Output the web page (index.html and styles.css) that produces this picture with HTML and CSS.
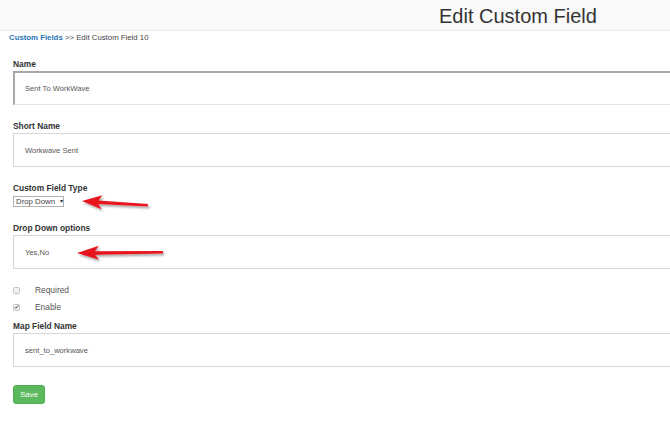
FILE: index.html
```html
<!DOCTYPE html>
<html>
<head>
<meta charset="utf-8">
<link rel="stylesheet" href="styles.css">
</head>
<body>
<div class="page">
  <header class="topbar">
    <h1 class="title">Edit Custom Field</h1>
  </header>
  <div class="crumbs"><a class="crumb-link">Custom Fields</a> &gt;&gt; Edit Custom Field 10</div>
  <form class="form">
    <div class="group">
      <label class="label">Name</label>
      <div class="input input-focus">Sent To WorkWave</div>
    </div>
    <div class="group">
      <label class="label">Short Name</label>
      <div class="input">Workwave Sent</div>
    </div>
    <div class="group group-select">
      <label class="label">Custom Field Type</label>
      <div class="select"><span>Drop Down</span><span class="caret">&#9662;</span></div>
    </div>
    <div class="group">
      <label class="label">Drop Down options</label>
      <div class="input">Yes,No</div>
    </div>
    <div class="checks">
      <div class="check-row"><span class="box"></span><span class="check-label">Required</span></div>
      <div class="check-row"><span class="box"><svg class="tick" viewBox="0 0 8 8" width="6" height="6"><path d="M1 4.2 L3 6.2 L7 1.5" fill="none" stroke="#555" stroke-width="1.6"/></svg></span><span class="check-label">Enable</span></div>
    </div>
    <div class="group">
      <label class="label">Map Field Name</label>
      <div class="input">sent_to_workwave</div>
    </div>
    <button type="button" class="btn-save">Save</button>
  </form>
  <svg class="arrows" width="670" height="421" viewBox="0 0 670 421">
    <defs>
      <filter id="sh" x="-20%" y="-50%" width="140%" height="200%">
        <feDropShadow dx="1.5" dy="2" stdDeviation="1.2" flood-color="#000" flood-opacity="0.35"/>
      </filter>
    </defs>
    <g filter="url(#sh)" fill="#e8141b">
      <path transform="translate(82 201) rotate(3.5)" d="M0 0 L20 -7 L16.5 -1.6 L66 -1.1 L66 1.4 L16.5 2 L20 7 Z"/>
      <path transform="translate(77 253) rotate(-0.6)" d="M0 0 L22 -7 L18 -1.6 L86 -1.1 L86 1.4 L18 2 L22 7 Z"/>
    </g>
  </svg>
</div>
</body>
</html>
```
FILE: styles.css
```css
html, body {
  margin: 0;
  padding: 0;
  background: #fff;
  overflow: hidden;
}
body {
  font-family: "Liberation Sans", Arial, sans-serif;
  color: #333;
}
.page {
  position: relative;
  width: 670px;
  height: 421px;
  overflow: hidden;
}
.topbar {
  height: 31px;
  background: #f9f9f9;
  border-bottom: 1px solid #ececec;
  box-sizing: border-box;
  display: flex;
  align-items: center;
  padding-left: 439px;
}
.title {
  margin: 0;
  font-size: 20px;
  font-weight: normal;
  color: #333;
  line-height: 24px;
  padding-top: 1px;
}
.crumbs {
  font-size: 7.8px;
  line-height: 10px;
  margin-top: 2px;
  padding-left: 9px;
  color: #444;
}
.crumb-link {
  color: #2a76b5;
  font-weight: bold;
}
.form {
  padding-left: 13px;
  margin-top: 16px;
}
.group {
  display: flex;
  flex-direction: column;
  gap: 2px;
  margin-bottom: 16px;
}
.group-select {
  gap: 3px;
}
.label {
  font-size: 8.4px;
  line-height: 10px;
  font-weight: bold;
  color: #333;
}
.input {
  width: 700px;
  height: 34px;
  box-sizing: border-box;
  border: 1px solid #d6d6d6;
  background: #fff;
  padding-left: 11px;
  font-size: 7.6px;
  color: #555;
  display: flex;
  align-items: center;
}
.input-focus {
  border-top: 2px solid #a8a8a8;
  border-left: 2px solid #a8a8a8;
  border-right: 1px solid #ddd;
  border-bottom: 1px solid #e4e4e4;
  padding-left: 10px;
}
.select {
  width: 51px;
  height: 11px;
  box-sizing: border-box;
  border: 1px solid #b0b0b0;
  font-size: 7.8px;
  line-height: 9px;
  color: #444;
  display: flex;
  align-items: center;
  padding-left: 2px;
  gap: 5px;
}
.caret {
  font-size: 6px;
  color: #333;
}
.checks {
  display: flex;
  flex-direction: column;
  gap: 7px;
  margin-bottom: 9px;
}
.check-row {
  display: flex;
  align-items: center;
  height: 10px;
}
.box {
  width: 7px;
  height: 7px;
  box-sizing: border-box;
  border: 1px solid #c4c4c4;
  border-radius: 1.5px;
  background: #f2f2f2;
  display: flex;
  align-items: center;
  justify-content: center;
}
.tick {
  display: block;
}
.check-label {
  margin-left: 15px;
  font-size: 8.4px;
  color: #555;
}
.btn-save {
  margin-top: -1px;
  width: 32px;
  height: 19px;
  border: 1px solid #4cae4c;
  border-radius: 3px;
  background: #5cb85c;
  color: #fff;
  font-family: "Liberation Sans", Arial, sans-serif;
  font-size: 8px;
  padding: 0;
}
.arrows {
  position: absolute;
  left: 0;
  top: 0;
  pointer-events: none;
}
```
